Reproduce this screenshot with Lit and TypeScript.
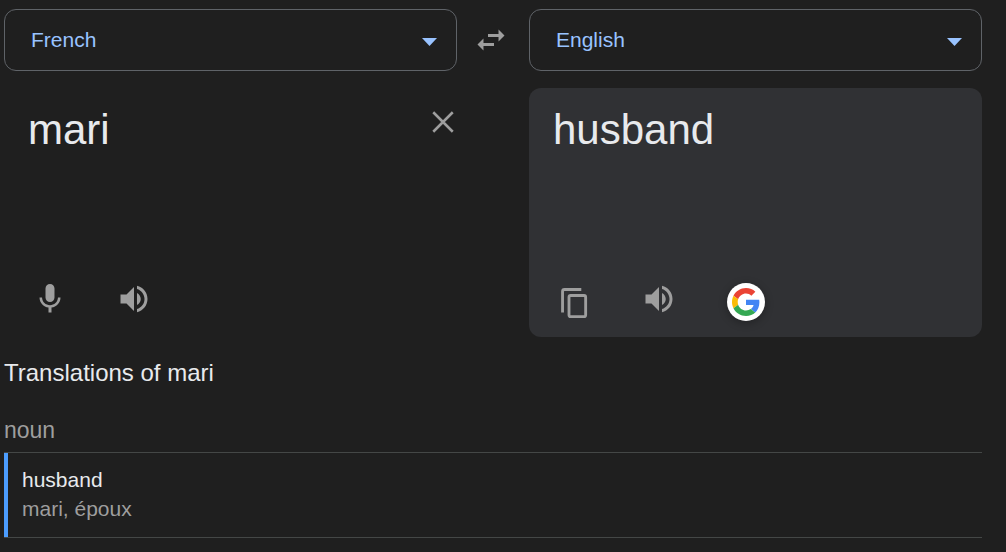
import { LitElement, html, css, svg } from "lit";
import { customElement, property, state } from "lit/decorators.js";

const GLYPHS = {
  swap: svg`<path d="M6.99 11L3 15l3.99 4v-3H14v-2H6.99v-3zM21 9l-3.99-4v3H10v2h7.01v3L21 9z"/>`,
  close: svg`<path d="M5.500 5.500l13 13M18.500 5.500l-13 13" fill="none" stroke="currentColor" stroke-width="1.700"/>`,
  mic: svg`<path d="M12 14c1.660 0 2.990-1.340 2.990-3L15 5c0-1.660-1.340-3-3-3S9 3.340 9 5v6c0 1.660 1.340 3 3 3zm5.300-3c0 3-2.540 5.100-5.300 5.100S6.700 14 6.700 11H5c0 3.410 2.720 6.230 6 6.720V21h2v-3.280c3.280-.480 6-3.300 6-6.720h-1.700z"/>`,
  speaker: svg`<path d="M3 9v6h4l5 5V4L7 9H3zm13.500 3c0-1.770-1.020-3.290-2.500-4.030v8.050c1.480-.730 2.500-2.250 2.500-4.020zM14 3.230v2.060c2.890.860 5 3.540 5 6.710s-2.110 5.850-5 6.710v2.060c4.010-.910 7-4.490 7-8.770s-2.990-7.860-7-8.770z"/>`,
  copy: svg`<g fill="none" stroke="currentColor" stroke-width="1.900"><path d="M3.700 21V6.950Q3.700 5.650 5 5.650H16.200"/><rect x="8" y="9.650" width="11.100" height="14.100" rx="1.100"/></g>`,
};

@customElement("ui-icon")
class UiIcon extends LitElement {
  @property() name: keyof typeof GLYPHS = "swap";
  static styles = css`
    :host { display: block; width: 36px; height: 36px; }
    .glyph { display: block; width: 100%; height: 100%; fill: currentColor; overflow: visible; }
  `;
  render() {
    return html`<svg class="glyph" viewBox="0 0 24 24" aria-hidden="true">${GLYPHS[this.name]}</svg>`;
  }
}

@customElement("language-select")
class LanguageSelect extends LitElement {
  @property() label = "";
  @property() value = "";
  static styles = css`
    :host { display: block; min-width: 0; }
    .box { display: grid; align-items: center; }
    .field, .arrow { grid-area: 1 / 1; }
    .field {
      appearance: none;
      width: 100%;
      height: 62px;
      margin: 0;
      padding: 0 48px 0 26px;
      border: 1px solid #5f6368;
      border-radius: 12px;
      background: transparent;
      color: #99c3ff;
      font: 21px/24px "Liberation Sans", Arial, sans-serif;
    }
    .field option { background: #1f1f1f; }
    .arrow {
      justify-self: end;
      width: 15px;
      height: 8px;
      margin: 4px 20px 0 0;
      fill: #99c3ff;
      pointer-events: none;
    }
  `;
  render() {
    return html`<div class="box">
      <select class="field" aria-label=${this.label} .value=${this.value}>
        ${["French", "English"].map(
          (l) => html`<option value=${l} ?selected=${l === this.value}>${l}</option>`
        )}
      </select>
      <svg class="arrow" viewBox="0 0 15 8" aria-hidden="true"><path d="M0 0h15L7.500 8z"/></svg>
    </div>`;
  }
}

@customElement("app-root")
class AppRoot extends LitElement {
  @state() source = "mari";
  static styles = css`
    :host {
      display: block;
      box-sizing: border-box;
      min-height: 100vh;
      padding: 9px 24px 14px 4px;
      background: #1f1f1f;
      color: #e8eaed;
      font-family: "Liberation Sans", Arial, sans-serif;
    }
    .translator {
      display: grid;
      grid-template-columns: minmax(0, 1fr) 72px minmax(0, 1fr);
      row-gap: 17px;
      align-items: stretch;
    }
    .button {
      display: grid;
      place-items: center;
      flex: none;
      width: 36px;
      height: 36px;
      margin: 0;
      padding: 0;
      border: 0;
      background: none;
      color: #9e9e9e;
      cursor: pointer;
    }
    .swap { align-self: center; margin-left: 16px; }
    .pane {
      display: flex;
      flex-direction: column;
      justify-content: space-between;
      box-sizing: border-box;
      min-height: 249px;
      padding: 16px 24px;
      border-radius: 12px;
    }
    .source { grid-column: 1; padding-right: 0; margin-right: -4px; }
    .target { grid-column: 3; background: #303134; }
    .entry { display: flex; align-items: flex-start; }
    .text {
      flex: 1;
      min-width: 0;
      height: 52px;
      margin: 0;
      padding: 0;
      border: 0;
      outline: 0;
      resize: none;
      overflow: hidden;
      background: none;
      color: #e8eaed;
      font: 42px/52px "Liberation Sans", Arial, sans-serif;
    }
    .target .text { flex: none; }
    .actions { display: flex; align-items: center; gap: 48px; padding-left: 4px; height: 44px; }
    .google {
      width: 38px;
      height: 38px;
      margin: 6px 0 0 2px;
      border-radius: 50%;
      background: #fff;
      box-shadow: 0 2px 8px rgba(0, 0, 0, 0.3);
    }
    .logo { display: block; width: 28px; height: 28px; }
    .heading { margin: 22px 0 0; font-size: 24px; line-height: 28px; font-weight: 400; }
    .kind { margin: 29px 0 8px; color: #9e9e9e; font-size: 23px; line-height: 28px; font-weight: 400; }
    .senses { border: solid #444746; border-width: 1px 0; }
    .sense {
      padding: 12px 14px 14px;
      border-left: 4px solid #4c9dff;
      font-size: 21px;
      line-height: 29px;
    }
    .word { margin: 0; }
    .back { margin: 0; color: #9e9e9e; }
  `;

  render() {
    return html`
      <main>
        <section class="translator" aria-label="Translator">
          <language-select label="Source language" value="French"></language-select>
          <button class="button swap" aria-label="Swap languages"><ui-icon name="swap"></ui-icon></button>
          <language-select label="Target language" value="English"></language-select>
          <div class="pane source">
            <div class="entry">
              <textarea class="text" rows="1" aria-label="Source text" spellcheck="false" .value=${this.source}
                @input=${(e: Event) => (this.source = (e.target as HTMLTextAreaElement).value)}></textarea>
              <button class="button" aria-label="Clear" @click=${() => (this.source = "")}>
                <ui-icon name="close"></ui-icon>
              </button>
            </div>
            <div class="actions">
              <button class="button" aria-label="Speak"><ui-icon name="mic"></ui-icon></button>
              <button class="button" aria-label="Listen"><ui-icon name="speaker"></ui-icon></button>
            </div>
          </div>
          <div class="pane target">
            <output class="text" aria-label="Translation">husband</output>
            <div class="actions">
              <button class="button" aria-label="Copy"><ui-icon name="copy"></ui-icon></button>
              <button class="button" aria-label="Listen"><ui-icon name="speaker"></ui-icon></button>
              <button class="button google" aria-label="Search with Google">
                <svg class="logo" viewBox="0 0 48 48" aria-hidden="true">
                  <path fill="#EA4335" d="M24 9.500c3.540 0 6.710 1.220 9.210 3.600l6.850-6.850C35.900 2.380 30.470 0 24 0 14.620 0 6.510 5.380 2.560 13.220l7.980 6.190C12.430 13.720 17.740 9.500 24 9.500z"/>
                  <path fill="#4285F4" d="M46.980 24.550c0-1.570-.150-3.090-.380-4.550H24v9.020h12.940c-.580 2.960-2.260 5.480-4.780 7.180l7.730 6c4.510-4.180 7.090-10.360 7.090-17.650z"/>
                  <path fill="#FBBC05" d="M10.530 28.590c-.480-1.450-.760-2.990-.760-4.590s.270-3.140.760-4.590l-7.980-6.190C.920 16.460 0 20.120 0 24c0 3.880.920 7.540 2.560 10.780l7.970-6.190z"/>
                  <path fill="#34A853" d="M24 48c6.480 0 11.930-2.130 15.890-5.810l-7.730-6c-2.150 1.450-4.920 2.300-8.160 2.300-6.260 0-11.570-4.220-13.470-9.910l-7.980 6.190C6.510 42.620 14.620 48 24 48z"/>
                </svg>
              </button>
            </div>
          </div>
        </section>
        <section>
          <h2 class="heading">Translations of ${this.source}</h2>
          <h3 class="kind">noun</h3>
          <div class="senses">
            <div class="sense">
              <p class="word">husband</p>
              <p class="back">mari, époux</p>
            </div>
          </div>
        </section>
      </main>
    `;
  }
}
